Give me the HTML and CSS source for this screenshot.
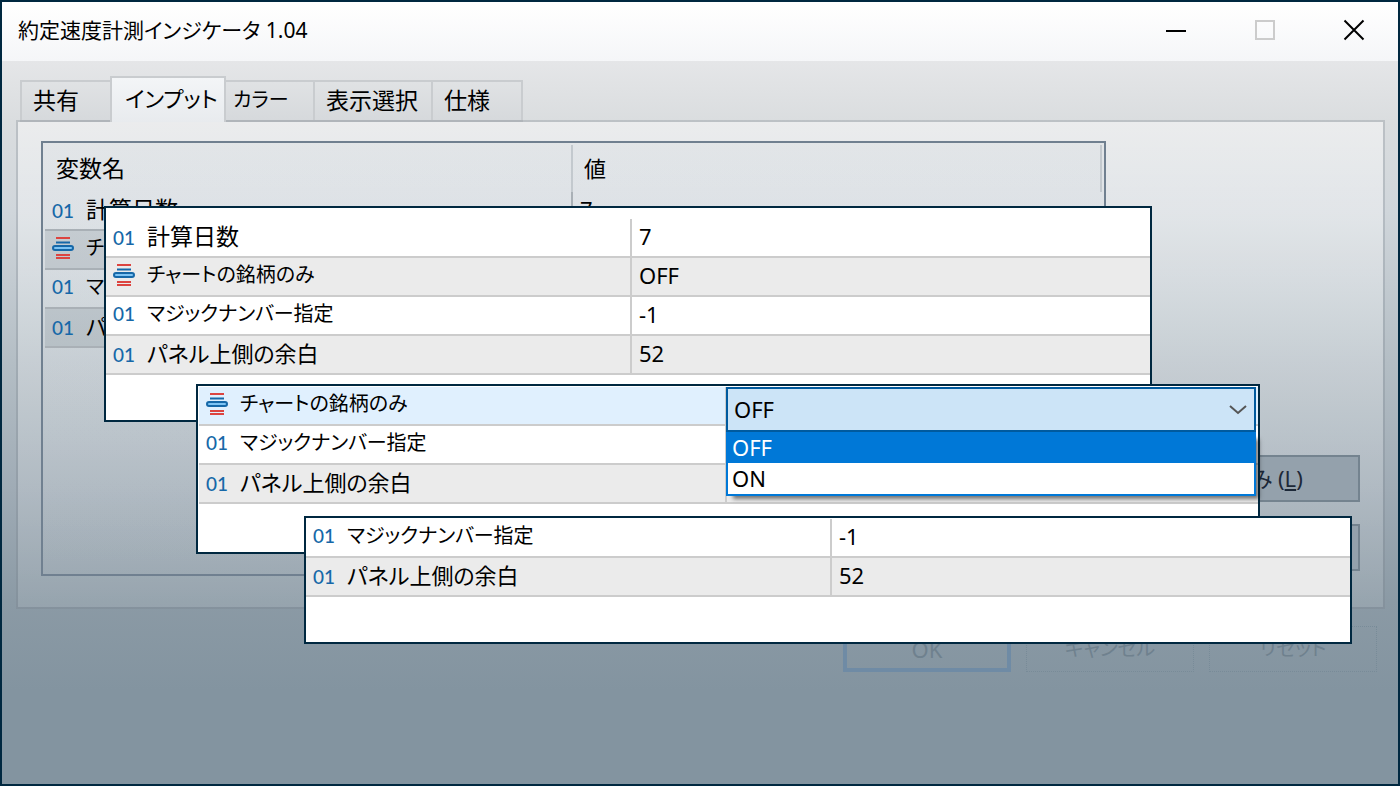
FILE: index.html
```html
<!DOCTYPE html>
<html lang="ja">
<head>
<meta charset="utf-8">
<title>約定速度計測インジケータ 1.04</title>
<link rel="stylesheet" href="styles.css">
</head>
<body>
<svg class="defs" aria-hidden="true">
  <symbol id="bars" viewBox="0 0 22 22">
    <path d="M4 1h14M4 18h14M4 21h14" stroke="#dc4440" stroke-width="2"/>
    <path d="M4 5.5h14" stroke="#1668a8" stroke-width="2"/>
    <rect x="1" y="9" width="20" height="4" rx="2" fill="#7ec4f4" stroke="#1668a8" stroke-width="2"/>
  </symbol>
</svg>
<main class="window">
  <header class="titlebar">
    <h1 class="title">約定速度計測インジケータ 1.04</h1>
    <div class="controls">
      <button class="control" aria-label="最小化"><svg width="22" height="22" viewBox="0 0 22 22"><path d="M1 12h20" stroke="#000" stroke-width="2"/></svg></button>
      <button class="control" aria-label="最大化" disabled><svg width="22" height="22" viewBox="0 0 22 22"><rect x="2" y="2" width="18" height="18" fill="none" stroke="#ccc" stroke-width="2"/></svg></button>
      <button class="control" aria-label="閉じる"><svg width="22" height="22" viewBox="0 0 22 22"><path d="M1.5 1.5l19 19M20.5 1.5l-19 19" stroke="#000" stroke-width="2"/></svg></button>
    </div>
  </header>

  <div class="body">
    <nav class="tabs" role="tablist">
      <button class="tab tab-s kanji" role="tab">共有</button>
      <button class="tab tab-active" role="tab" aria-selected="true">インプット</button>
      <button class="tab tab-s kana" role="tab">カラー</button>
      <button class="tab tab-l kanji" role="tab">表示選択</button>
      <button class="tab tab-s kanji" role="tab">仕様</button>
    </nav>
    <section class="page">
      <div class="list">
        <table class="grid base">
          <thead><tr><th class="name kanji">変数名</th><th class="value">値</th></tr></thead>
          <tbody>
            <tr><td class="name kanji"><span class="num">01</span>計算日数</td><td>7</td></tr>
            <tr class="alt"><td class="name kana"><svg class="ico"><use href="#bars"/></svg>チャートの銘柄のみ</td><td>OFF</td></tr>
            <tr><td class="name kana"><span class="num">01</span>マジックナンバー指定</td><td>-1</td></tr>
            <tr class="alt"><td class="name"><span class="num">01</span>パネル上側の余白</td><td>52</td></tr>
          </tbody>
        </table>
      </div>
      <div class="side">
        <button class="side-button">読み込み (<u>L</u>)</button>
        <button class="side-button">保存 (<u>S</u>)</button>
      </div>
    </section>
    <footer class="footer">
      <button class="foot-button default">OK</button>
      <button class="foot-button kana">キャンセル</button>
      <button class="foot-button kana">リセット</button>
    </footer>
  </div>

  <section class="callout first">
    <table class="grid">
      <tr><td class="name kanji"><span class="num">01</span>計算日数</td><td>7</td></tr>
      <tr class="alt"><td class="name kana"><svg class="ico"><use href="#bars"/></svg>チャートの銘柄のみ</td><td>OFF</td></tr>
      <tr><td class="name kana"><span class="num">01</span>マジックナンバー指定</td><td>-1</td></tr>
      <tr class="alt"><td class="name"><span class="num">01</span>パネル上側の余白</td><td>52</td></tr>
    </table>
  </section>

  <section class="callout second">
    <table class="grid">
      <tr class="selected"><td class="name kana"><svg class="ico"><use href="#bars"/></svg><label for="only">チャートの銘柄のみ</label></td><td></td></tr>
      <tr><td class="name kana"><span class="num">01</span>マジックナンバー指定</td><td></td></tr>
      <tr class="alt"><td class="name"><span class="num">01</span>パネル上側の余白</td><td></td></tr>
    </table>
    <div class="combo">
      <div class="combo-box">
        <select class="combo-select" id="only"><option>OFF</option><option>ON</option></select>
        <svg class="chevron" width="18" height="10" viewBox="0 0 18 10"><path d="M1 1l8 7 8-7" fill="none" stroke="#555" stroke-width="2"/></svg>
      </div>
      <ul class="options" role="listbox">
        <li class="option current" role="option">OFF</li>
        <li class="option" role="option">ON</li>
      </ul>
    </div>
  </section>

  <section class="callout third">
    <table class="grid">
      <tr><td class="name kana"><span class="num">01</span>マジックナンバー指定</td><td>-1</td></tr>
      <tr class="alt"><td class="name"><span class="num">01</span>パネル上側の余白</td><td>52</td></tr>
    </table>
  </section>
</main>
</body>
</html>
```
FILE: styles.css
```css
* { box-sizing: border-box; }

body {
  margin: 0;
  font-family: "Noto Sans", "Noto Sans CJK JP", sans-serif;
  font-size: 22px;
  line-height: 30px;
  font-feature-settings: "palt";
  color: #000;
}

button, select {
  font: inherit;
  font-feature-settings: inherit;
  color: inherit;
  margin: 0;
}

.kanji { font-size: 23px; }
.kana { font-size: 20px; }

.defs { position: absolute; width: 0; height: 0; }

.window {
  position: relative;
  display: flex;
  flex-direction: column;
  min-height: 100vh;
  border: 2px solid #002840;
}

.titlebar {
  display: flex;
  justify-content: space-between;
  align-items: center;
  height: 59px;
  padding: 0 33px 4px 16px;
  background: linear-gradient(#fff, #f5f6f8);
}

.title { margin: 0; font-size: 21px; font-weight: 400; }

.controls { display: flex; gap: 67px; }

.control {
  display: flex;
  padding: 0;
  border: 0;
  background: none;
}

.body {
  flex: 1;
  display: flex;
  flex-direction: column;
  padding: 15px 13px 0 14px;
  background: linear-gradient(#e5e6e8 0, #dadddf 60px, #d0d6db 150px, #b4bec5 300px, #9fabb5 430px, #8b9aa5 540px, #8394a0 630px);
}

.tabs {
  display: flex;
  align-items: flex-end;
  margin: 0 0 -2px 4px;
}

.tab {
  height: 42px;
  margin-left: -2px;
  padding: 0 11px 2px;
  border: 2px solid #c9cccf;
  background: linear-gradient(#e0e2e4, #d6d9dc);
  text-align: left;
  white-space: nowrap;
}

.tab-s { width: 91px; }
.tab:first-child { width: 92px; margin-left: 0; }
.tab:nth-child(3) { padding-left: 7px; }
.tab-l { width: 120px; }
.tab:last-child { width: 92px; }

.tab-active {
  z-index: 1;
  width: 116px;
  height: 46px;
  padding: 0 13px 4px;
  border-bottom: 0;
  background: linear-gradient(#f3f5f7, #e8ebee);
}

.page {
  display: flex;
  justify-content: space-between;
  height: 489px;
  padding: 19px 23px 31px;
  border: 2px solid rgba(120, 130, 138, 0.3);
  background: linear-gradient(rgba(255, 255, 255, 0.45), rgba(255, 255, 255, 0.25) 50%, rgba(255, 255, 255, 0.1)) padding-box;
}

.list {
  width: 1065px;
  padding: 2px;
  border: 2px solid #708090;
  background: linear-gradient(rgba(200, 208, 216, 0.2), rgba(200, 208, 216, 0)) padding-box;
}

.grid {
  width: 100%;
  border-spacing: 0;
  table-layout: fixed;
}

.grid th {
  height: 47px;
  padding: 0 11px 2px;
  border-right: 2px solid #c3c9ce;
  font-weight: 400;
  text-align: left;
}

.grid td {
  height: 39px;
  padding: 0 7px 3px;
  border-bottom: 2px solid #ccc;
  white-space: nowrap;
}

.grid .name { width: 526px; }
.grid td.name { border-right: 2px solid #ccc; }
.base .name { width: 528px; }
.base td, .base td.name { border-color: #a9b0b6; }

.alt td { background: #ebebeb; }
.base .alt td { background: rgba(120, 132, 142, 0.22); }
.selected td { background: #e0f0fe; }

.num {
  display: inline-block;
  width: 34px;
  font-family: Lato, sans-serif;
  font-size: 19px;
  font-weight: 500;
  line-height: 20px;
  color: #1668a8;
}

.ico {
  display: inline-block;
  width: 22px;
  height: 22px;
  margin-right: 12px;
  vertical-align: -4px;
}

.side {
  display: flex;
  flex-direction: column;
  justify-content: flex-end;
  gap: 22px;
  padding-bottom: 5px;
}

.side-button {
  width: 220px;
  height: 47px;
  padding: 0 12px 2px 0;
  border: 2px solid #74838f;
  background: #94a1ac;
  color: #1c2838;
}

.footer {
  display: flex;
  justify-content: flex-end;
  gap: 15px;
  padding: 17px 8px 0 0;
}

.foot-button {
  width: 168px;
  height: 46px;
  border: 1px dotted #788b98;
  background: none;
  color: #6f818e;
}

.foot-button.default { border: 4px solid #6f8ba5; }

.callout {
  position: absolute;
  border: 2px solid #002840;
  background: #fff;
}

.first { top: 204px; left: 102px; right: 246px; height: 216px; padding-top: 11px; }
.second { top: 382px; left: 194px; right: 138px; height: 170px; padding: 1px 0 0 1px; }
.third { top: 514px; left: 302px; right: 46px; height: 128px; padding-top: 1px; }

.second .name { width: 528px; }

.combo {
  position: absolute;
  top: 1px;
  left: 528px;
  right: 2px;
}

.combo-box {
  display: flex;
  align-items: center;
  height: 45px;
  padding-right: 7px;
  border: 2px solid #005a9e;
  background: #cce4f7;
}

.combo-select {
  flex: 1;
  height: 41px;
  padding: 0 6px 2px;
  border: 0;
  appearance: none;
  background: none;
}

.options {
  margin: 0;
  padding: 0 0 1px;
  border: 2px solid #0078d7;
  border-top: 0;
  list-style: none;
  background: #fff;
  box-shadow: 5px 5px 4px -2px rgba(0, 0, 0, 0.5);
}

.option { height: 30px; padding: 0 4px; }
.option.current { height: 31px; background: #0078d7; color: #fff; }
```
